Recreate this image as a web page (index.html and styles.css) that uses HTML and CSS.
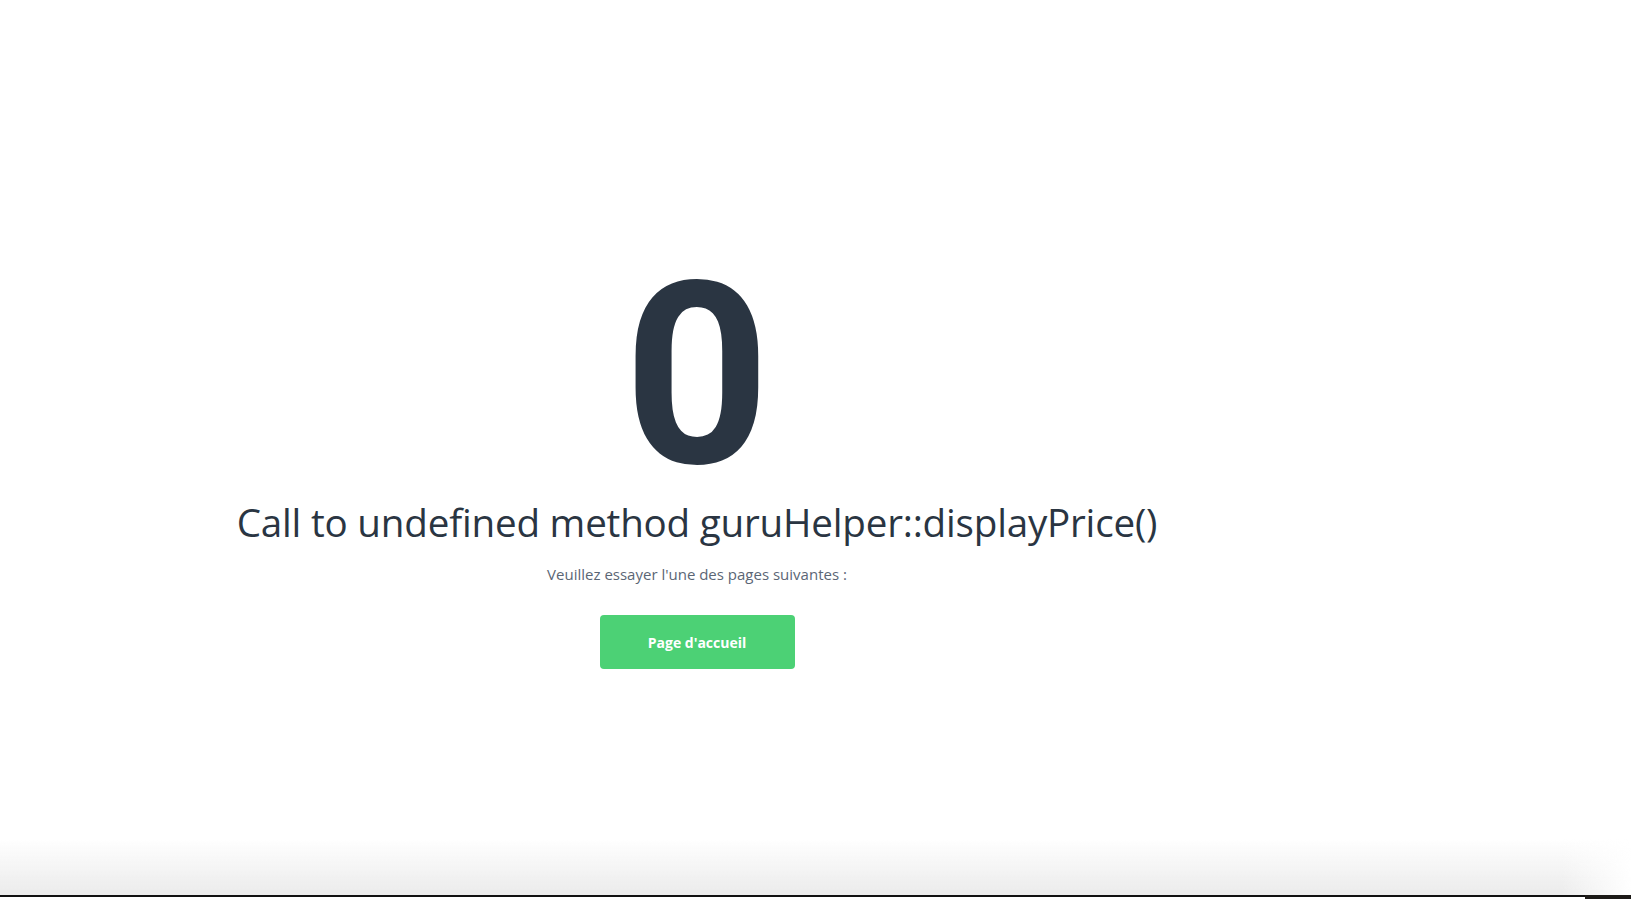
FILE: index.html
```html
<!DOCTYPE html>
<html lang="fr">
<head>
<meta charset="utf-8">
<title>Erreur</title>
<link rel="stylesheet" href="styles.css">
</head>
<body>
<main class="page">
  <section class="error">
    <div class="code">0</div>
    <h1 class="message">Call to undefined method guruHelper::displayPrice()</h1>
    <p class="hint">Veuillez essayer l'une des pages suivantes :</p>
    <a class="btn" href="#">Page d'accueil</a>
  </section>
</main>
<div class="bottom-bar"></div>
</body>
</html>
```
FILE: styles.css
```css
html, body {
  margin: 0;
  padding: 0;
  background: #ffffff;
  height: 100%;
  overflow: hidden;
}
body {
  font-family: "Open Sans", Lato, sans-serif;
  color: #2a3542;
}
.page {
  width: 1394px;
  display: flex;
  justify-content: center;
}
.error {
  display: flex;
  flex-direction: column;
  align-items: center;
  padding-top: 249px;
}
.code {
  font-family: Roboto, "Open Sans", sans-serif;
  font-size: 255px;
  font-weight: 700;
  line-height: 254px;
  color: #2a3542;
}
.message {
  margin: 0;
  margin-top: -4px;
  font-size: 38.6px;
  font-weight: 400;
  line-height: 46px;
  letter-spacing: -0.2px;
  color: #2a3542;
}
.hint {
  margin: 19px 0 0;
  font-size: 15px;
  line-height: 20px;
  color: #5b6675;
}
.btn {
  margin-top: 31px;
  width: 195px;
  height: 54px;
  display: flex;
  align-items: center;
  justify-content: center;
  background: #4cd175;
  border-radius: 4px;
  color: #ffffff;
  font-weight: 700;
  font-size: 14px;
  text-decoration: none;
}
.bottom-bar {
  position: fixed;
  left: 0;
  right: 0;
  bottom: 0;
  height: 58px;
  background:
    linear-gradient(to right, rgba(255,255,255,0) calc(100% - 70px), #ffffff),
    linear-gradient(to bottom, rgba(255,255,255,0), #ececec 95%);
  border-bottom: 2px solid #111;
  box-sizing: border-box;
  margin-bottom: 2px;
}
.bottom-bar::after {
  content: "";
  position: absolute;
  right: 0;
  bottom: -4px;
  width: 46px;
  height: 4px;
  background: #1c1a17;
}
```
